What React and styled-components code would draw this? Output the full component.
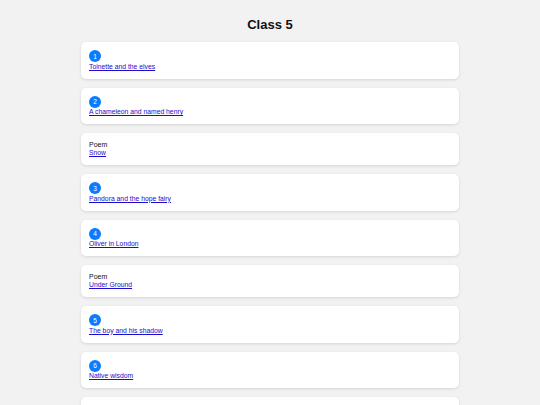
import React from "react";
import styled, { createGlobalStyle } from "styled-components";

const Global = createGlobalStyle`
  html, body { margin: 0; padding: 0; background: #f2f2f2; }
  body { font-family: "Liberation Sans", Arial, sans-serif; }
`;

const Page = styled.div`
  width: 378px;
  margin: 0 auto;
  padding-bottom: 20px;
`;

const Title = styled.h1`
  margin: 17px 0 9px;
  font-size: 13px;
  line-height: 16px;
  font-weight: bold;
  text-align: center;
  color: #111;
`;

const List = styled.div`
  display: flex;
  flex-direction: column;
  gap: 9px;
`;

const Card = styled.div`
  background: #fff;
  border-radius: 5px;
  box-shadow: 0 1px 3px rgba(0, 0, 0, 0.12);
  padding: 8px;
`;

const Badge = styled.span`
  display: flex;
  align-items: center;
  justify-content: center;
  width: 12px;
  height: 12px;
  border-radius: 50%;
  background: #0a7cff;
  color: #fff;
  font-size: 6.5px;
  margin-bottom: 0.5px;
`;

const Label = styled.div`
  font-size: 7px;
  line-height: 8px;
  color: #111;
`;

const Link = styled.a`
  display: block;
  width: fit-content;
  font-size: 6.8px;
  line-height: 8px;
  color: #1a0dcc;
  text-decoration: underline;
`;

const items = [
  { n: 1, t: "Toinette and the elves" },
  { n: 2, t: "A chameleon and named henry" },
  { poem: true, t: "Snow" },
  { n: 3, t: "Pandora and the hope fairy" },
  { n: 4, t: "Oliver in London" },
  { poem: true, t: "Under Ground" },
  { n: 5, t: "The boy and his shadow" },
  { n: 6, t: "Native wisdom" },
  { n: 7, t: "The wonderful world" },
];

export default function App() {
  return (
    <>
      <Global />
      <Page>
        <Title>Class 5</Title>
        <List>
          {items.map((it, i) => (
            <Card key={i}>
              {it.poem ? <Label>Poem</Label> : <Badge>{it.n}</Badge>}
              <Link href="#">{it.t}</Link>
            </Card>
          ))}
        </List>
      </Page>
    </>
  );
}
